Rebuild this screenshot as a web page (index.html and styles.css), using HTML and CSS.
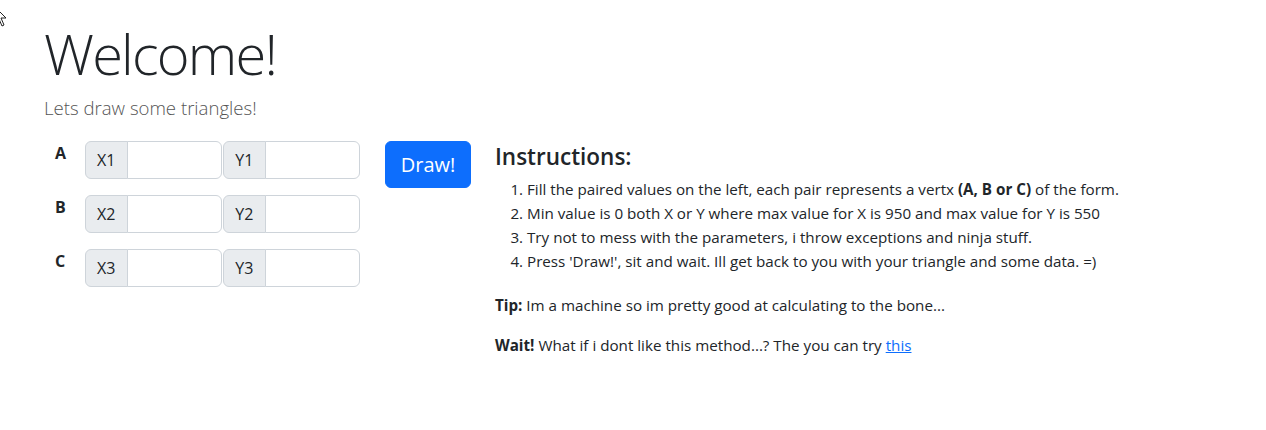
FILE: index.html
```html
<!DOCTYPE html>
<html lang="en">
<head>
<meta charset="utf-8">
<title>Triangles</title>
<link rel="stylesheet" href="styles.css">
</head>
<body>
<svg class="cursor" width="14" height="22" viewBox="0 0 14 22"><path d="M1 1 L1 17 L5 13 L8 20 L10 19 L7 12 L12 12 Z" fill="#fff" stroke="#222" stroke-width="1"/></svg>
<div class="container">
  <h1 class="title">Welcome!</h1>
  <p class="lead">Lets draw some triangles!</p>
  <div class="main">
    <div class="vertices">
      <div class="vrow">
        <span class="vlabel">A</span>
        <div class="igroup"><span class="itext">X1</span><input class="ifield" type="text"></div>
        <div class="igroup"><span class="itext">Y1</span><input class="ifield" type="text"></div>
      </div>
      <div class="vrow">
        <span class="vlabel">B</span>
        <div class="igroup"><span class="itext">X2</span><input class="ifield" type="text"></div>
        <div class="igroup"><span class="itext">Y2</span><input class="ifield" type="text"></div>
      </div>
      <div class="vrow">
        <span class="vlabel">C</span>
        <div class="igroup"><span class="itext">X3</span><input class="ifield" type="text"></div>
        <div class="igroup"><span class="itext">Y3</span><input class="ifield" type="text"></div>
      </div>
    </div>
    <div class="action">
      <button class="btn-draw" type="button">Draw!</button>
    </div>
    <div class="instructions">
      <h4 class="ititle">Instructions:</h4>
      <ol class="steps">
        <li>Fill the paired values on the left, each pair represents a vertx <b>(A, B or C)</b> of the form.</li>
        <li>Min value is 0 both X or Y where max value for X is 950 and max value for Y is 550</li>
        <li>Try not to mess with the parameters, i throw exceptions and ninja stuff.</li>
        <li>Press 'Draw!', sit and wait. Ill get back to you with your triangle and some data. =)</li>
      </ol>
      <p class="note"><b>Tip:</b> Im a machine so im pretty good at calculating to the bone...</p>
      <p class="note"><b>Wait!</b> What if i dont like this method...? The you can try <a href="#" class="link">this</a></p>
    </div>
  </div>
</div>
</body>
</html>
```
FILE: styles.css
```css
* { box-sizing: border-box; }
body {
  margin: 0;
  font-family: "Open Sans", "Noto Sans", sans-serif;
  font-size: 16px;
  line-height: 1.5;
  color: #212529;
  background: #fff;
}
.cursor {
  position: absolute;
  left: -6px;
  top: 6px;
}
.container {
  padding: 20px 0 0 44px;
}
.title {
  margin: 0;
  font-size: 56px;
  font-weight: 300;
  line-height: 1.2;
  letter-spacing: -1.8px;
}
.lead {
  margin: 7px 0 19px;
  font-size: 18.6px;
  line-height: 27.9px;
  font-weight: 300;
  color: #555;
}
.main {
  display: flex;
  align-items: flex-start;
}
.vertices {
  display: flex;
  flex-direction: column;
  gap: 16px;
  width: 316px;
}
.vrow {
  display: flex;
  align-items: flex-start;
}
.vlabel {
  width: 41px;
  padding-left: 11px;
  font-weight: 700;
}
.igroup {
  display: flex;
  width: 138px;
}
.igroup + .igroup {
  margin-left: 1px;
}
.itext {
  width: 43px;
  height: 38px;
  display: flex;
  align-items: center;
  justify-content: center;
  background: #e9ecef;
  border: 1px solid #ced4da;
  border-radius: 6px 0 0 6px;
  font-size: 16px;
}
.ifield {
  width: 95px;
  height: 38px;
  margin-left: -1px;
  border: 1px solid #ced4da;
  border-radius: 0 6px 6px 0;
  font: inherit;
  padding: 6px 12px;
}
.action {
  width: 111px;
  padding-left: 25px;
}
.btn-draw {
  width: 86px;
  height: 47px;
  border: 1px solid #0d6efd;
  background: #0d6efd;
  color: #fff;
  font-family: inherit;
  font-size: 20px;
  border-radius: 6px;
  padding: 0;
}
.instructions {
  padding: 2px 0 0 24px;
  font-size: 15.2px;
  line-height: 24px;
}
.ititle {
  margin: 0 0 7px;
  font-size: 22.5px;
  font-weight: 600;
  line-height: 27px;
}
.steps {
  margin: 0 0 20px;
  padding-left: 32px;
}
.note {
  margin: 0 0 16px;
}
.link {
  color: #0d6efd;
}
```
